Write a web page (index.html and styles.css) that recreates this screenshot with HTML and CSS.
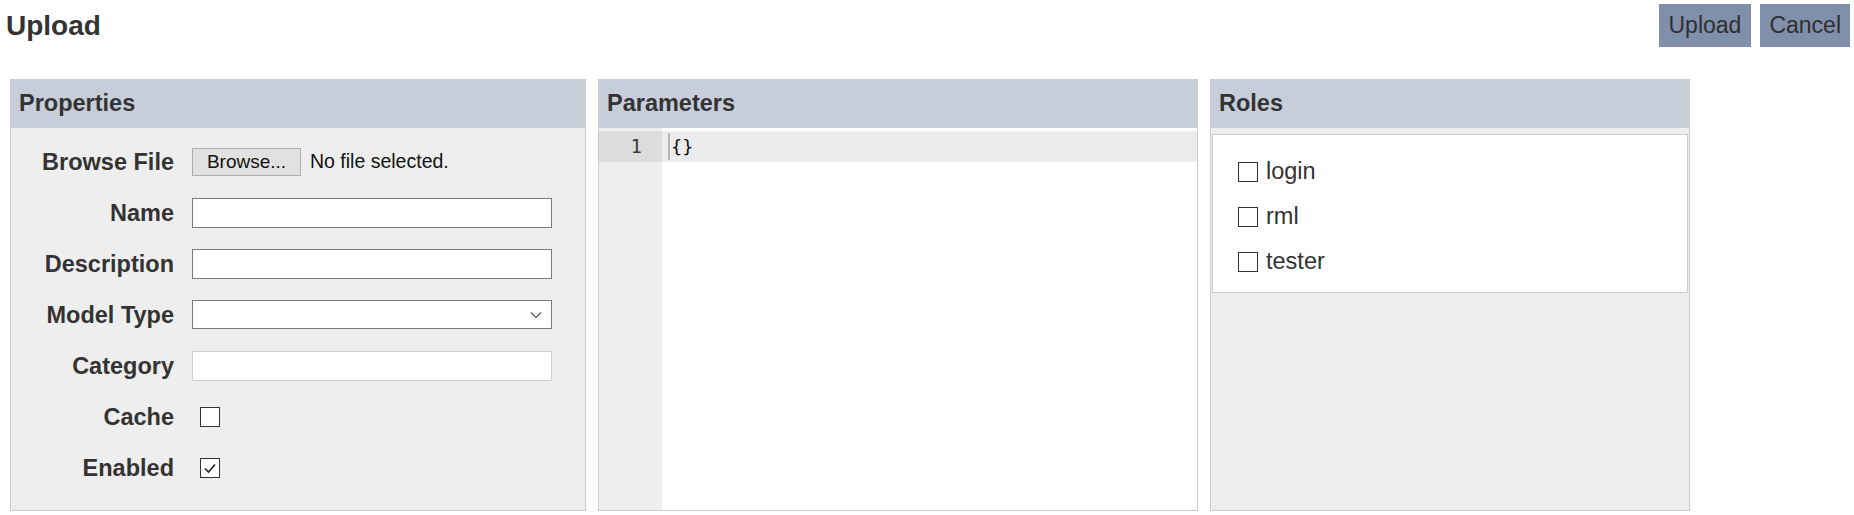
FILE: index.html
```html
<!DOCTYPE html>
<html lang="en">
<head>
<meta charset="utf-8">
<title>Upload</title>
<link rel="stylesheet" href="styles.css">
</head>
<body>
<div class="page">
  <header class="topbar">
    <h1 class="title">Upload</h1>
    <div class="actions">
      <button class="btn btn-upload" type="button">Upload</button>
      <button class="btn btn-cancel" type="button">Cancel</button>
    </div>
  </header>

  <main class="panels">
    <section class="panel panel-props">
      <div class="panel-head">Properties</div>
      <div class="panel-body form">
        <label class="lbl">Browse File</label>
        <div class="file">
          <span class="file-btn">Browse...</span>
          <span class="file-name">No file selected.</span>
        </div>

        <label class="lbl">Name</label>
        <input class="inp" type="text">

        <label class="lbl">Description</label>
        <input class="inp" type="text">

        <label class="lbl">Model Type</label>
        <div class="sel">
          <svg class="chev" width="12" height="8" viewBox="0 0 12 8"><path d="M1 1.5 L6 6.5 L11 1.5" fill="none" stroke="#555" stroke-width="1.2"/></svg>
        </div>

        <label class="lbl">Category</label>
        <input class="inp inp-light" type="text">

        <label class="lbl">Cache</label>
        <span class="cb"></span>

        <label class="lbl">Enabled</label>
        <span class="cb">
          <svg width="16" height="16" viewBox="0 0 16 16"><path d="M3 8.5 L6.5 12 L13 4.5" fill="none" stroke="#222" stroke-width="1.6"/></svg>
        </span>
      </div>
    </section>

    <section class="panel panel-params">
      <div class="panel-head">Parameters</div>
      <div class="panel-body editor">
        <div class="gutter">
          <div class="ln active">1</div>
        </div>
        <div class="code">
          <div class="line active"><span class="cursor"></span><span class="txt">{}</span></div>
        </div>
      </div>
    </section>

    <section class="panel panel-roles">
      <div class="panel-head">Roles</div>
      <div class="panel-body roles">
        <ul class="role-list">
          <li class="role"><span class="cb cb-sm"></span><span>login</span></li>
          <li class="role"><span class="cb cb-sm"></span><span>rml</span></li>
          <li class="role"><span class="cb cb-sm"></span><span>tester</span></li>
        </ul>
      </div>
    </section>
  </main>
</div>
</body>
</html>
```

FILE: styles.css
```css
* { box-sizing: border-box; }

html, body {
  margin: 0;
  padding: 0;
  background: #ffffff;
}

body {
  font-family: "Liberation Sans", Arial, sans-serif;
  color: #333333;
}

.page {
  width: 1854px;
  height: 515px;
}

.topbar {
  height: 79px;
  display: flex;
  justify-content: space-between;
  align-items: flex-start;
}

.title {
  margin: 10px 0 0 6px;
  font-size: 28px;
  line-height: 32px;
  font-weight: bold;
  color: #333333;
}

.actions {
  display: flex;
  gap: 9px;
  margin: 4px 4px 0 0;
}

.btn {
  height: 43px;
  padding: 0 10px;
  border: none;
  background: #808fab;
  color: #2f2f2f;
  font-family: "Liberation Sans", Arial, sans-serif;
  font-size: 23px;
  line-height: 43px;
  cursor: pointer;
}

.btn-cancel { padding: 0 9px; }

.panels {
  display: flex;
  gap: 12px;
  padding-left: 10px;
}

.panel {
  height: 432px;
  border: 1px solid #cccccc;
  background: #eeeeee;
  display: flex;
  flex-direction: column;
}

.panel-props { width: 576px; }
.panel-params { width: 600px; }
.panel-roles { width: 480px; }

.panel-head {
  height: 48px;
  line-height: 46px;
  padding-left: 8px;
  background: #c7ceda;
  font-size: 23.5px;
  font-weight: bold;
  color: #333333;
  flex: none;
}

.panel-body {
  flex: 1;
}

/* Properties form */
.form {
  display: grid;
  grid-template-columns: 163px 360px;
  grid-auto-rows: 51px;
  column-gap: 18px;
  align-items: center;
  padding-top: 8px;
}

.lbl {
  text-align: right;
  font-size: 23.5px;
  font-weight: bold;
  color: #333333;
  padding-top: 2px;
}

.file {
  display: flex;
  align-items: center;
  gap: 9px;
}

.file-btn {
  width: 109px;
  height: 28px;
  background: #e1e1e1;
  border: 1px solid #adadad;
  font-size: 19px;
  line-height: 26px;
  text-align: center;
  color: #111111;
}

.file-name {
  font-size: 19.5px;
  color: #111111;
}

.inp {
  width: 360px;
  height: 30px;
  border: 1px solid #7a7a7a;
  background: #ffffff;
  margin: 0;
  padding: 0 4px;
  font-size: 18px;
}

.inp-light {
  border-color: #cfcfcf;
}

.sel {
  width: 360px;
  height: 29px;
  border: 1px solid #7a7a7a;
  background: #ffffff;
  display: flex;
  align-items: center;
  justify-content: flex-end;
  padding-right: 9px;
}

.chev { display: block; }

.cb {
  width: 20px;
  height: 20px;
  margin-left: 8px;
  border: 1.5px solid #333333;
  background: #ffffff;
  display: flex;
  align-items: center;
  justify-content: center;
}

/* Parameters editor */
.editor {
  display: flex;
  background: #ffffff;
}

.gutter {
  width: 63px;
  background: #efefef;
  padding-top: 3px;
  flex: none;
}

.ln {
  height: 31px;
  line-height: 31px;
  text-align: right;
  padding-right: 20px;
  font-family: "DejaVu Sans Mono", "Liberation Mono", monospace;
  font-size: 19px;
  color: #3a3a3a;
}

.ln.active { background: #dcdcdc; }

.code {
  flex: 1;
  padding-top: 3px;
}

.line {
  height: 31px;
  display: flex;
  align-items: center;
  padding-left: 6px;
  font-family: "DejaVu Sans Mono", "Liberation Mono", monospace;
  font-size: 18.5px;
  color: #111111;
}

.line.active { background: #ececec; }

.cursor {
  width: 2px;
  height: 27px;
  background: #b5b5b5;
  margin-right: 1px;
}

/* Roles */
.roles {
  padding: 6px 1px 0 1px;
}

.role-list {
  list-style: none;
  margin: 0;
  padding: 14px 0 8px 25px;
  background: #ffffff;
  border: 1px solid #cccccc;
}

.role {
  height: 45px;
  display: flex;
  align-items: center;
  gap: 8px;
  font-size: 23.5px;
  color: #333333;
}

.cb-sm {
  margin-left: 0;
  border-width: 1.2px;
}
```
